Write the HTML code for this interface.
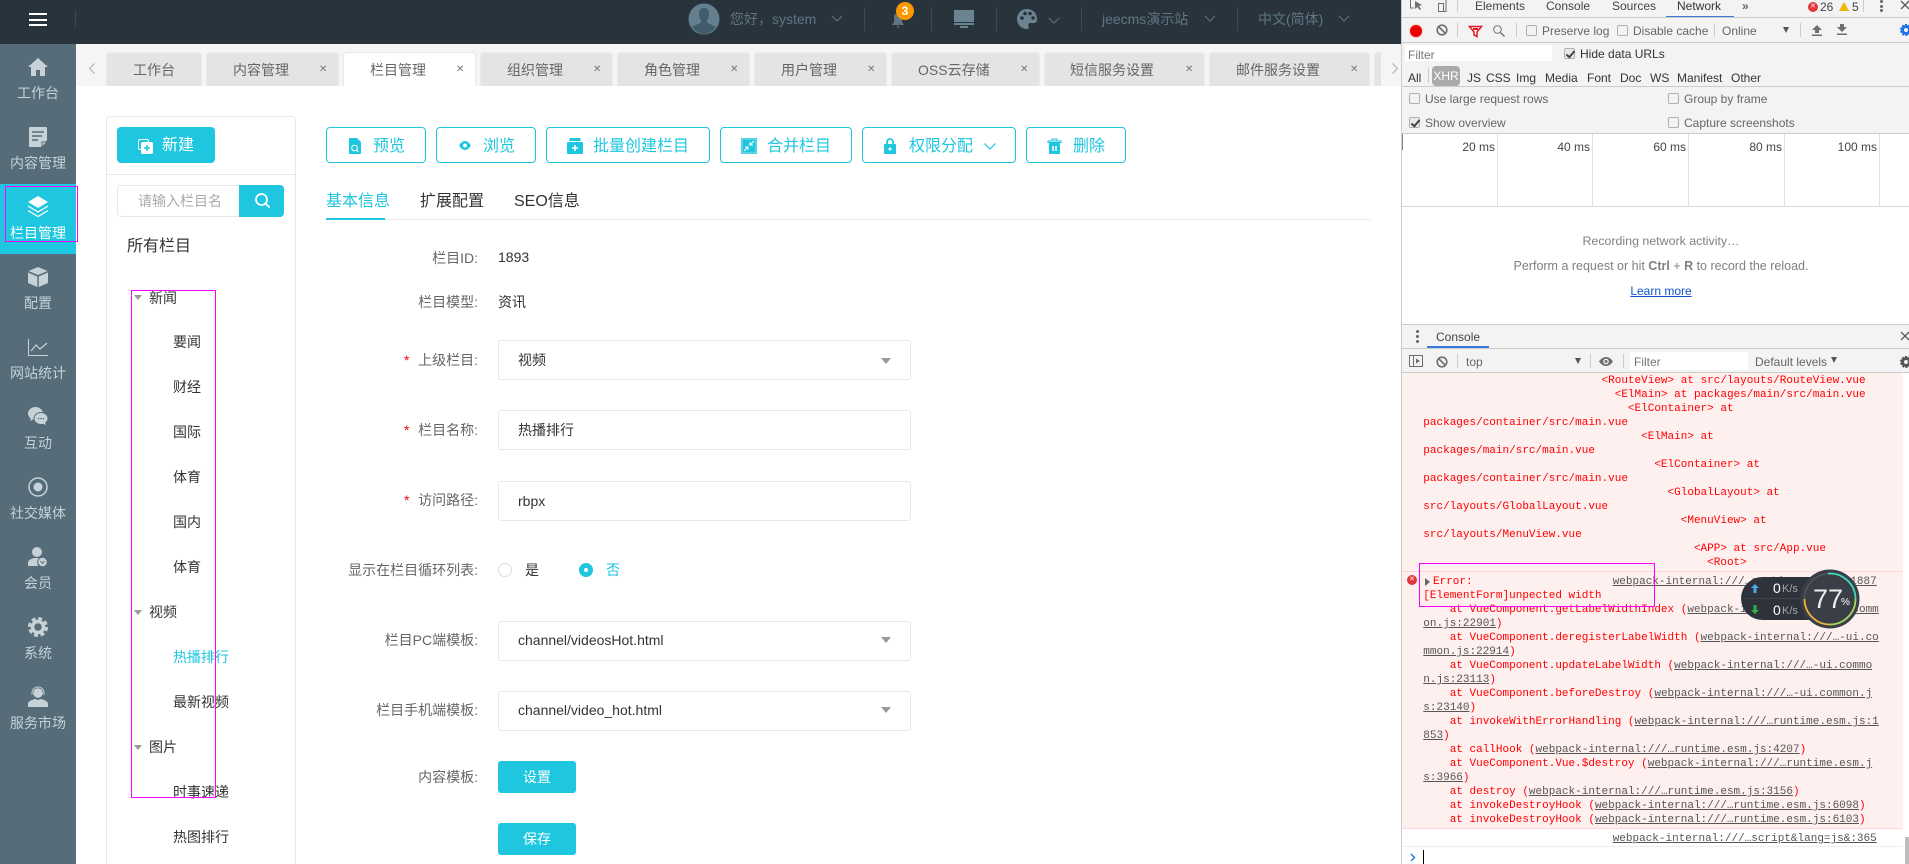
<!DOCTYPE html>
<html lang="zh-CN"><head><meta charset="utf-8"><title>栏目管理</title>
<style>
*{box-sizing:border-box}
html,body{margin:0;padding:0;width:1909px;height:864px;overflow:hidden;background:#fff}
body{position:relative;font-family:"Liberation Sans","Noto Sans CJK SC",sans-serif;font-size:14px;color:#333}
.t{position:absolute;white-space:pre;line-height:20px}
.b{position:absolute}
svg{position:absolute;overflow:visible}
.nav{left:0;width:76px;text-align:center;color:#c6d2d8}
.tab{position:absolute;top:52px;height:34px;background:#e4e4e4;border:1px solid #eaeaea;border-bottom:0;border-radius:4px 4px 0 0}
.tt{top:60px;color:#666}
.x{top:60px;color:#777;font-size:10px}
.btn{position:absolute;top:127px;height:36px;border:1px solid #1ec6df;border-radius:4px;background:#fff}
.bt{top:137px;font-size:16px;color:#1ec6df}
.lab{left:0;width:478px;text-align:right;color:#666}
.star{left:404px;color:#f00}
.inp{position:absolute;left:498px;width:413px;height:40px;border:1px solid #e8e8e8;border-radius:3px;background:#fff}
.val{left:518px;color:#333}
.tri{position:absolute;width:0;height:0;border-left:5px solid transparent;border-right:5px solid transparent;border-top:6px solid #999}
.c1{left:149px;color:#333}.c2{left:173px;color:#333}
.top{top:9px;color:#5f7682}
.dv{position:absolute;top:7px;width:1px;height:24px;background:#3c4a54}
.d{font-size:12px;line-height:16px;color:#444;position:absolute;white-space:pre}
.l{position:absolute;background:#ccc}
.cb{position:absolute;width:11px;height:11px;background:#f3f3f3;border:1px solid #b0b0b0;border-radius:2px}
.cb.on{background:#e8e8e8}
.cb.on:after{content:"";position:absolute;left:3px;top:0;width:3px;height:7px;border:solid #444;border-width:0 2px 2px 0;transform:rotate(40deg)}
.sp{position:absolute;width:1px;background:#ccc}
pre{position:absolute;margin:0;font-family:"Liberation Mono",monospace;font-size:11px;line-height:14px;color:#f00;white-space:pre}
u{color:#555}
.mg{position:absolute;border:1px solid #f0f;pointer-events:none}
</style></head>
<body>

<!-- top bar -->
<div class="b" style="left:0;top:0;width:1402px;height:44px;background:#29333c"></div>
<div class="b" style="left:29px;top:13px;width:18px;height:2px;background:#fff"></div>
<div class="b" style="left:29px;top:19px;width:18px;height:2px;background:#fff"></div>
<div class="b" style="left:29px;top:24px;width:18px;height:2px;background:#fff"></div>
<div class="dv" style="left:75px;top:10px;height:18px"></div>
<svg style="left:688px;top:3px" width="32" height="32" viewBox="0 0 32 32"><circle cx="16" cy="16" r="15.5" fill="#64808f"/><path d="M11 11c0-4 2-6 5-6s5 2 5 6c0 3-1 5-2 6v2c1 2 6 3 9 5-3 4-7 7-12 7S7 28 4 24c3-2 8-3 9-5v-2c-1-1-2-3-2-6z" fill="#415c6b"/></svg>
<div class="t top" style="left:730px">您好，system</div>
<svg style="left:832px;top:16px" width="10" height="6"><path d="M0 0l5 5 5-5" fill="none" stroke="#5f7682"/></svg>
<div class="dv" style="left:864px"></div>
<svg style="left:891px;top:12px" width="14" height="16" viewBox="0 0 14 16"><path d="M7 1C4 1 3 3 3 6v4L1 13h12l-2-3V6c0-3-1-5-4-5zM5.500 14h3L7 16z" fill="#5f7682"/></svg>
<div class="b" style="left:896px;top:2px;width:18px;height:18px;border-radius:50%;background:#ff9800;color:#fff;font-weight:bold;font-size:12px;line-height:18px;text-align:center">3</div>
<div class="dv" style="left:931px"></div>
<svg style="left:954px;top:10px" width="20" height="18" viewBox="0 0 20 18"><path d="M0 0h20v12H0zM0 13h20v2H0zM6 16h8v2H6z" fill="#6a8492"/></svg>
<div class="dv" style="left:996px"></div>
<svg style="left:1017px;top:9px" width="20" height="20" viewBox="0 0 20 20"><path d="M10 0a10 10 0 1 0 0 20c2 0 2-1.500 1.500-3-.6-1.800.5-3 2-3H17c2 0 3-1.500 3-4 0-6-4.500-10-10-10z" fill="#6a8492"/><circle cx="5" cy="9" r="1.800" fill="#29333c"/><circle cx="8" cy="4.500" r="1.800" fill="#29333c"/><circle cx="13" cy="4.500" r="1.800" fill="#29333c"/><circle cx="16" cy="9" r="1.800" fill="#29333c"/></svg>
<svg style="left:1049px;top:18px" width="10" height="6"><path d="M0 0l5 5 5-5" fill="none" stroke="#5f7682"/></svg>
<div class="dv" style="left:1081px"></div>
<div class="t top" style="left:1102px">jeecms演示站</div>
<svg style="left:1205px;top:16px" width="10" height="6"><path d="M0 0l5 5 5-5" fill="none" stroke="#5f7682"/></svg>
<div class="dv" style="left:1237px"></div>
<div class="t top" style="left:1258px">中文(简体)</div>
<svg style="left:1339px;top:16px" width="10" height="6"><path d="M0 0l5 5 5-5" fill="none" stroke="#5f7682"/></svg>

<!-- sidebar -->
<div class="b" style="left:0;top:44px;width:76px;height:820px;background:#566c78"></div>
<div class="b" style="left:0;top:184px;width:76px;height:70px;background:#1ec6df"></div>

<svg style="left:28px;top:57px" width="20" height="20" viewBox="0 0 20 20"><path d="M10 1L0 10h3v9h5v-6h4v6h5v-9h3z" fill="#c6d2d8"/></svg>
<div class="t nav" style="top:83px">工作台</div>
<svg style="left:29px;top:127px" width="18" height="20" viewBox="0 0 18 20"><path d="M1 0h16a1 1 0 0 1 1 1v12l-6 7H1a1 1 0 0 1-1-1V1a1 1 0 0 1 1-1z" fill="#c6d2d8"/><path d="M3 5h12M3 9h10M3 13h6" stroke="#566c78" stroke-width="1.500"/><path d="M13 20v-5h5z" fill="#c6d2d8" stroke="#566c78"/></svg>
<div class="t nav" style="top:153px">内容管理</div>
<svg style="left:28px;top:196px" width="20" height="21" viewBox="0 0 20 21"><path d="M10 0l10 6-10 6L0 6z" fill="#fff"/><path d="M0 10l10 6 10-6M0 14.500l10 6 10-6" fill="none" stroke="#fff" stroke-width="1.300"/></svg>
<div class="t nav" style="top:223px;color:#fff">栏目管理</div>
<svg style="left:28px;top:267px" width="20" height="20" viewBox="0 0 20 20"><path d="M10 0l9.500 4L10 8 .5 4zM0 5.500l9.300 4V20L0 16zM20 5.500l-9.300 4V20l9.300-4z" fill="#c6d2d8"/></svg>
<div class="t nav" style="top:293px">配置</div>
<svg style="left:28px;top:339px" width="20" height="17" viewBox="0 0 20 17"><path d="M.5 0v16.500H20" fill="none" stroke="#c6d2d8"/><path d="M3 12l5-6 4 4 7-6" fill="none" stroke="#c6d2d8" stroke-width="1.200"/></svg>
<div class="t nav" style="top:363px">网站统计</div>
<svg style="left:28px;top:407px" width="20" height="20" viewBox="0 0 20 20"><path d="M7.500 0C3.400 0 0 2.900 0 6.500c0 2 1 3.800 2.700 5L2 14l3-1.500c.8.200 1.600.3 2.500.3C11.600 12.800 15 9.900 15 6.500S11.600 0 7.500 0z" fill="#c6d2d8"/><path d="M13 5.500c-3.900 0-7 2.700-7 6s3.100 6 7 6c.7 0 1.300-.1 2-.2L18.500 19l-.8-3.200c1.400-1.100 2.300-2.600 2.300-4.300 0-3.300-3.100-6-7-6z" fill="#c6d2d8" stroke="#566c78"/><circle cx="10.500" cy="11.500" r=".8" fill="#566c78"/><circle cx="13" cy="11.500" r=".8" fill="#566c78"/><circle cx="15.500" cy="11.500" r=".8" fill="#566c78"/></svg>
<div class="t nav" style="top:433px">互动</div>
<svg style="left:28px;top:477px" width="20" height="20" viewBox="0 0 20 20"><circle cx="10" cy="10" r="9" fill="none" stroke="#c6d2d8" stroke-width="1.500"/><circle cx="10" cy="10" r="4.500" fill="#c6d2d8"/></svg>
<div class="t nav" style="top:503px">社交媒体</div>
<svg style="left:28px;top:547px" width="20" height="20" viewBox="0 0 20 20"><circle cx="9" cy="5" r="5" fill="#c6d2d8"/><path d="M0 19v-3c0-3 3-4 6-5h6l1 1a6 6 0 0 0-3 7z" fill="#c6d2d8"/><circle cx="14.500" cy="15" r="4.800" fill="#c6d2d8" stroke="#566c78"/><path d="M12.500 14l2 2.500 2-2.500" fill="none" stroke="#566c78"/></svg>
<div class="t nav" style="top:573px">会员</div>
<svg style="left:28px;top:617px" width="20" height="20" viewBox="0 0 20 20"><circle cx="10" cy="10" r="8.500" fill="none" stroke="#c6d2d8" stroke-width="3" stroke-dasharray="4 2.670"/><circle cx="10" cy="10" r="5.500" fill="none" stroke="#c6d2d8" stroke-width="3.500"/></svg>
<div class="t nav" style="top:643px">系统</div>
<svg style="left:28px;top:687px" width="20" height="20" viewBox="0 0 20 20"><circle cx="10" cy="6" r="4.800" fill="#c6d2d8"/><path d="M4 8V6a6 6 0 0 1 12 0v2" fill="none" stroke="#c6d2d8"/><path d="M0 20v-3c0-3 4-4 7-5l3 1 3-1c3 1 7 2 7 5v3z" fill="#c6d2d8"/></svg>
<div class="t nav" style="top:713px">服务市场</div>

<div class="mg" style="left:5px;top:186px;width:73px;height:56px"></div>

<!-- tab bar -->
<div class="b" style="left:76px;top:44px;width:1326px;height:42px;background:#f5f5f5"></div>
<svg style="left:89px;top:63px" width="6" height="11"><path d="M5.500 .5L.5 5.500l5 5" fill="none" stroke="#aaa"/></svg>
<div class="tab" style="left:106px;width:96px"></div><div class="t tt" style="left:133px">工作台</div>
<div class="tab" style="left:206px;width:133px"></div><div class="t tt" style="left:233px">内容管理</div><div class="t x" style="left:319px">✕</div>
<div class="tab" style="left:343px;width:133px;background:#fff;border-color:#e8e8e8"></div><div class="t tt" style="left:370px">栏目管理</div><div class="t x" style="left:456px">✕</div>
<div class="tab" style="left:480px;width:133px"></div><div class="t tt" style="left:507px">组织管理</div><div class="t x" style="left:593px">✕</div>
<div class="tab" style="left:617px;width:133px"></div><div class="t tt" style="left:644px">角色管理</div><div class="t x" style="left:730px">✕</div>
<div class="tab" style="left:754px;width:133px"></div><div class="t tt" style="left:781px">用户管理</div><div class="t x" style="left:867px">✕</div>
<div class="tab" style="left:891px;width:149px"></div><div class="t tt" style="left:918px">OSS云存储</div><div class="t x" style="left:1020px">✕</div>
<div class="tab" style="left:1044px;width:161px"></div><div class="t tt" style="left:1070px">短信服务设置</div><div class="t x" style="left:1185px">✕</div>
<div class="tab" style="left:1209px;width:161px"></div><div class="t tt" style="left:1236px">邮件服务设置</div><div class="t x" style="left:1350px">✕</div>
<div class="tab" style="left:1374px;width:7px;border-right:0;border-radius:4px 0 0 0"></div>
<svg style="left:1392px;top:63px" width="6" height="11"><path d="M.5 .5l5 5-5 5" fill="none" stroke="#aaa"/></svg>

<!-- left tree panel -->
<div class="b" style="left:106px;top:116px;width:190px;height:760px;border:1px solid #e8e8e8;border-radius:4px"></div>
<div class="b" style="left:107px;top:174px;width:188px;height:1px;background:#e8e8e8"></div>
<div class="b" style="left:117px;top:127px;width:98px;height:36px;background:#1ec6df;border-radius:4px"></div>
<svg style="left:138px;top:139px" width="15" height="15" viewBox="0 0 15 15"><rect x=".5" y=".5" width="10" height="10" rx="1.500" fill="none" stroke="#fff"/><rect x="3" y="3" width="12" height="12" rx="2" fill="#fff"/><path d="M9 6v6M6 9h6" stroke="#1ec6df" stroke-width="1.500"/></svg>
<div class="t" style="left:162px;top:136px;font-size:16px;color:#fff">新建</div>
<div class="b" style="left:117px;top:185px;width:123px;height:32px;border:1px solid #e8e8e8;border-radius:4px 0 0 4px"></div>
<div class="t" style="left:138px;top:191px;color:#aaa">请输入栏目名</div>
<div class="b" style="left:239px;top:185px;width:45px;height:32px;background:#1ec6df;border-radius:0 4px 4px 0"></div>
<svg style="left:255px;top:193px" width="15" height="15" viewBox="0 0 15 15"><circle cx="6.500" cy="6.500" r="5.500" fill="none" stroke="#fff" stroke-width="1.800"/><path d="M10.500 10.500l4 4" stroke="#fff" stroke-width="1.800"/></svg>
<div class="t" style="left:127px;top:237px;font-size:16px;color:#333">所有栏目</div>

<div class="tri" style="left:134px;top:295px;border-left-width:4px;border-right-width:4px;border-top-width:5px"></div>
<div class="t c1" style="top:288px">新闻</div>
<div class="t c2" style="top:332px">要闻</div>
<div class="t c2" style="top:377px">财经</div>
<div class="t c2" style="top:422px">国际</div>
<div class="t c2" style="top:467px">体育</div>
<div class="t c2" style="top:512px">国内</div>
<div class="t c2" style="top:557px">体育</div>
<div class="tri" style="left:134px;top:610px;border-left-width:4px;border-right-width:4px;border-top-width:5px"></div>
<div class="t c1" style="top:602px">视频</div>
<div class="t c2" style="top:647px;color:#1ec6df">热播排行</div>
<div class="t c2" style="top:692px">最新视频</div>
<div class="tri" style="left:134px;top:745px;border-left-width:4px;border-right-width:4px;border-top-width:5px"></div>
<div class="t c1" style="top:737px">图片</div>
<div class="t c2" style="top:782px">时事速递</div>
<div class="t c2" style="top:827px">热图排行</div>
<div class="mg" style="left:131px;top:290px;width:85px;height:508px"></div>

<!-- action buttons -->
<div class="btn" style="left:326px;width:100px"></div>
<svg style="left:349px;top:138px" width="12" height="16" viewBox="0 0 12 16"><path d="M0 1a1 1 0 0 1 1-1h7l4 4v11a1 1 0 0 1-1 1H1a1 1 0 0 1-1-1z" fill="#1ec6df"/><circle cx="5.500" cy="10" r="2.800" fill="none" stroke="#fff"/><path d="M7.500 12l2 2" stroke="#fff"/></svg>
<div class="t bt" style="left:373px">预览</div>
<div class="btn" style="left:436px;width:100px"></div>
<svg style="left:459px;top:141px" width="12" height="9" viewBox="0 0 12 9"><path d="M0 4.500C2 1.500 4 0 6 0s4 1.500 6 4.500C10 7.500 8 9 6 9S2 7.500 0 4.500z" fill="#1ec6df"/><circle cx="6" cy="4.500" r="2" fill="#fff"/></svg>
<div class="t bt" style="left:483px">浏览</div>
<div class="btn" style="left:546px;width:164px"></div>
<svg style="left:567px;top:138px" width="16" height="16" viewBox="0 0 16 16"><path d="M3 0h10l1 3H2zM1 4h14a1 1 0 0 1 1 1v10a1 1 0 0 1-1 1H1a1 1 0 0 1-1-1V5a1 1 0 0 1 1-1z" fill="#1ec6df"/><path d="M8 7v6M5 10h6" stroke="#fff" stroke-width="1.500"/></svg>
<div class="t bt" style="left:593px">批量创建栏目</div>
<div class="btn" style="left:720px;width:132px"></div>
<svg style="left:741px;top:138px" width="16" height="16" viewBox="0 0 16 16"><path d="M0 0h16v16H0z" fill="#1ec6df"/><path d="M1 1h14v14H1z" fill="none" stroke="#fff" stroke-width=".5"/><path d="M13 3L9 7M9 4v3h3M3 13l4-4M4 9h3v3" fill="none" stroke="#fff"/></svg>
<div class="t bt" style="left:767px">合并栏目</div>
<div class="btn" style="left:862px;width:154px"></div>
<svg style="left:884px;top:138px" width="12" height="16" viewBox="0 0 12 16"><path d="M3 6V4a3 3 0 0 1 6 0v2" fill="none" stroke="#1ec6df" stroke-width="1.800"/><rect y="6" width="12" height="10" rx="1" fill="#1ec6df"/><circle cx="6" cy="11" r="1.500" fill="#fff"/></svg>
<div class="t bt" style="left:909px">权限分配</div>
<svg style="left:984px;top:143px" width="12" height="7"><path d="M.5 .5l5.500 5.500 5.500-5.500" fill="none" stroke="#1ec6df" stroke-width="1.200"/></svg>
<div class="btn" style="left:1026px;width:100px"></div>
<svg style="left:1048px;top:138px" width="13" height="16" viewBox="0 0 13 16"><path d="M0 3h13v1.500H0zM4 3V1h5v2" fill="none" stroke="#1ec6df"/><path d="M1 5h11v11H1z" fill="#1ec6df"/><path d="M5 8v5M8 8v5" stroke="#fff" stroke-width="1.500"/></svg>
<div class="t bt" style="left:1073px">删除</div>

<!-- form tabs -->
<div class="b" style="left:326px;top:219px;width:1045px;height:1px;background:#e8e8e8"></div>
<div class="b" style="left:326px;top:218px;width:59px;height:2px;background:#1ec6df"></div>
<div class="t" style="left:326px;top:192px;font-size:16px;color:#1ec6df">基本信息</div>
<div class="t" style="left:420px;top:192px;font-size:16px;color:#333">扩展配置</div>
<div class="t" style="left:514px;top:192px;font-size:16px;color:#333">SEO信息</div>

<!-- form -->
<div class="t lab" style="top:248px">栏目ID:</div>
<div class="t" style="left:498px;top:247px;color:#333">1893</div>
<div class="t lab" style="top:292px">栏目模型:</div>
<div class="t" style="left:498px;top:292px;color:#333">资讯</div>

<div class="t star" style="top:350px">*</div><div class="t lab" style="top:350px">上级栏目:</div>
<div class="inp" style="top:340px"></div><div class="t val" style="top:350px">视频</div><div class="tri" style="left:881px;top:358px"></div>

<div class="t star" style="top:420px">*</div><div class="t lab" style="top:420px">栏目名称:</div>
<div class="inp" style="top:410px"></div><div class="t val" style="top:420px">热播排行</div>

<div class="t star" style="top:490px">*</div><div class="t lab" style="top:490px">访问路径:</div>
<div class="inp" style="top:481px"></div><div class="t val" style="top:491px">rbpx</div>

<div class="t lab" style="top:560px">显示在栏目循环列表:</div>
<div class="b" style="left:498px;top:563px;width:14px;height:14px;border:1px solid #ddd;border-radius:50%"></div>
<div class="t" style="left:525px;top:560px;color:#333">是</div>
<div class="b" style="left:579px;top:563px;width:14px;height:14px;background:#1ec6df;border-radius:50%"></div>
<div class="b" style="left:584px;top:568px;width:4px;height:4px;background:#fff;border-radius:50%"></div>
<div class="t" style="left:606px;top:560px;color:#1ec6df">否</div>

<div class="t lab" style="top:630px">栏目PC端模板:</div>
<div class="inp" style="top:621px"></div><div class="t val" style="top:630px">channel/videosHot.html</div><div class="tri" style="left:881px;top:637px"></div>
<div class="t lab" style="top:700px">栏目手机端模板:</div>
<div class="inp" style="top:691px"></div><div class="t val" style="top:700px">channel/video_hot.html</div><div class="tri" style="left:881px;top:707px"></div>

<div class="t lab" style="top:767px">内容模板:</div>
<div class="b" style="left:498px;top:761px;width:78px;height:32px;background:#1ec6df;border-radius:3px;color:#fff;text-align:center;line-height:32px">设置</div>
<div class="b" style="left:498px;top:823px;width:78px;height:32px;background:#1ec6df;border-radius:3px;color:#fff;text-align:center;line-height:32px">保存</div>

<!-- devtools -->
<div class="b" style="left:1401px;top:0;width:508px;height:864px;background:#f3f3f3;border-left:1px solid #ccc"></div>

<svg style="left:1410px;top:0" width="14" height="11" viewBox="0 0 14 11"><path d="M.5 0v8H4" fill="none" stroke="#6e6e6e"/><path d="M5 1l7 4-3 1 2 3-1.500 1-2-3-2.500 2z" fill="#6e6e6e"/></svg>
<svg style="left:1434px;top:0" width="16" height="12" viewBox="0 0 16 12"><path d="M4.500 3.500h5v8h-5zM12 0v11.500H9.500" fill="none" stroke="#6e6e6e"/></svg>
<div class="sp" style="left:1457px;top:0;height:12px"></div>
<div class="d" style="left:1475px;top:-2px">Elements</div>
<div class="d" style="left:1546px;top:-2px">Console</div>
<div class="d" style="left:1612px;top:-2px">Sources</div>
<div class="d" style="left:1677px;top:-2px;color:#333">Network</div>
<div class="b" style="left:1666px;top:16px;width:68px;height:2px;background:#3879d9"></div>
<div class="d" style="left:1742px;top:-2px;font-weight:bold;color:#666">»</div>
<div class="b" style="left:1808px;top:2px;width:10px;height:10px;border-radius:50%;background:#e0363a;color:#fff;font-size:7px;line-height:10px;text-align:center">✕</div>
<div class="d" style="left:1820px;top:-1px">26</div>
<svg style="left:1839px;top:2px" width="10" height="9"><path d="M5 0l5 9H0z" fill="#f4b400"/></svg>
<div class="d" style="left:1852px;top:-1px">5</div>
<div class="sp" style="left:1863px;top:0;height:12px"></div>
<div class="b" style="left:1880px;top:0;width:3px;height:3px;border-radius:50%;background:#666"></div>
<div class="b" style="left:1880px;top:5px;width:3px;height:3px;border-radius:50%;background:#666"></div>
<div class="b" style="left:1880px;top:9px;width:3px;height:3px;border-radius:50%;background:#666"></div>
<svg style="left:1901px;top:1px" width="8" height="9"><path d="M0 0l8 8M8 0L0 8" stroke="#555" stroke-width="1.300"/></svg>
<div class="l" style="left:1402px;top:17px;width:507px;height:1px"></div>
<div class="b" style="left:1409px;top:24px;width:14px;height:14px;border-radius:50%;background:#ffc5c5"></div>
<div class="b" style="left:1410px;top:25px;width:12px;height:12px;border-radius:50%;background:#e60000"></div>
<svg style="left:1436px;top:24px" width="12" height="12" viewBox="0 0 12 12"><circle cx="6" cy="6" r="4.800" fill="none" stroke="#6e6e6e" stroke-width="1.600"/><path d="M2.500 2.500l7 7" stroke="#6e6e6e" stroke-width="1.600"/></svg>
<div class="sp" style="left:1457px;top:23px;height:14px"></div>
<svg style="left:1469px;top:26px" width="13" height="11" viewBox="0 0 13 11"><path d="M.5 .5h12L8 6v4.500L5 9V6z" fill="#fff" stroke="#e0181e" stroke-width="1.500"/><path d="M4 3h5" stroke="#e0181e" stroke-width="2"/></svg>
<svg style="left:1493px;top:25px" width="12" height="12" viewBox="0 0 12 12"><circle cx="4.500" cy="4.500" r="3.800" fill="none" stroke="#6e6e6e"/><path d="M7.500 7.500l4 4" stroke="#6e6e6e" stroke-width="1.300"/></svg>
<div class="sp" style="left:1516px;top:23px;height:14px"></div>
<div class="cb" style="left:1526px;top:25px"></div>
<div class="d" style="left:1542px;top:23px;color:#666">Preserve log</div>
<div class="cb" style="left:1617px;top:25px"></div>
<div class="d" style="left:1633px;top:23px;color:#666">Disable cache</div>
<div class="sp" style="left:1714px;top:23px;height:14px"></div>
<div class="d" style="left:1722px;top:23px;color:#666">Online</div>
<div class="tri" style="left:1783px;top:27px;border-left-width:3px;border-right-width:3px;border-top:6px solid #555"></div>
<div class="sp" style="left:1800px;top:23px;height:14px"></div>
<svg style="left:1812px;top:25px" width="10" height="11" viewBox="0 0 10 11"><path d="M5 0l5 5H7v3H3V5H0zM0 9.500h10V11H0z" fill="#6e6e6e"/></svg>
<svg style="left:1837px;top:24px" width="10" height="11" viewBox="0 0 10 11"><path d="M5 8l5-5H7V0H3v3H0zM0 9.500h10V11H0z" fill="#6e6e6e"/></svg>
<svg style="left:1900px;top:24px" width="12" height="12" viewBox="0 0 12 12"><circle cx="6" cy="6" r="3.500" fill="none" stroke="#1a73e8" stroke-width="3"/><circle cx="6" cy="6" r="5.300" fill="none" stroke="#1a73e8" stroke-width="1.500" stroke-dasharray="2 1.400"/></svg>
<div class="l" style="left:1402px;top:42px;width:507px;height:1px"></div>

<div class="b" style="left:1405px;top:45px;width:147px;height:16px;background:#fff"></div>
<div class="d" style="left:1408px;top:47px;color:#757575">Filter</div>
<div class="cb on" style="left:1564px;top:48px"></div>
<div class="d" style="left:1580px;top:46px;color:#333">Hide data URLs</div>
<div class="d" style="left:1408px;top:70px;color:#333">All</div>
<div class="sp" style="left:1428px;top:68px;height:15px"></div>
<div class="b" style="left:1432px;top:66px;width:28px;height:20px;background:#aaa;border-radius:4px;color:#fff;font-size:12px;line-height:20px;text-align:center">XHR</div>
<div class="d" style="left:1467px;top:70px;color:#333">JS</div>
<div class="d" style="left:1486px;top:70px;color:#333">CSS</div>
<div class="d" style="left:1516px;top:70px;color:#333">Img</div>
<div class="d" style="left:1545px;top:70px;color:#333">Media</div>
<div class="d" style="left:1587px;top:70px;color:#333">Font</div>
<div class="d" style="left:1620px;top:70px;color:#333">Doc</div>
<div class="d" style="left:1650px;top:70px;color:#333">WS</div>
<div class="d" style="left:1677px;top:70px;color:#333">Manifest</div>
<div class="d" style="left:1731px;top:70px;color:#333">Other</div>
<div class="l" style="left:1402px;top:86px;width:507px;height:1px"></div>
<div class="cb" style="left:1409px;top:93px"></div><div class="d" style="left:1425px;top:91px;color:#666">Use large request rows</div>
<div class="cb" style="left:1668px;top:93px"></div><div class="d" style="left:1684px;top:91px;color:#666">Group by frame</div>
<div class="cb on" style="left:1409px;top:117px"></div><div class="d" style="left:1425px;top:115px;color:#666">Show overview</div>
<div class="cb" style="left:1668px;top:117px"></div><div class="d" style="left:1684px;top:115px;color:#666">Capture screenshots</div>
<div class="l" style="left:1402px;top:133px;width:507px;height:1px"></div>

<div class="b" style="left:1402px;top:134px;width:507px;height:190px;background:#fff"></div>
<div class="b" style="left:1402px;top:134px;width:1px;height:16px;background:#888"></div>
<div class="sp" style="left:1497px;top:134px;height:72px;background:#e0e0e0"></div>
<div class="sp" style="left:1592px;top:134px;height:72px;background:#e0e0e0"></div>
<div class="sp" style="left:1688px;top:134px;height:72px;background:#e0e0e0"></div>
<div class="sp" style="left:1784px;top:134px;height:72px;background:#e0e0e0"></div>
<div class="sp" style="left:1879px;top:134px;height:72px;background:#e0e0e0"></div>
<div class="d" style="right:414px;top:139px">20 ms</div>
<div class="d" style="right:319px;top:139px">40 ms</div>
<div class="d" style="right:223px;top:139px">60 ms</div>
<div class="d" style="right:127px;top:139px">80 ms</div>
<div class="d" style="right:32px;top:139px">100 ms</div>
<div class="l" style="left:1402px;top:206px;width:507px;height:1px;background:#d8d8d8"></div>
<div class="d" style="left:1402px;width:518px;top:233px;text-align:center;color:#808080;font-size:12.4px">Recording network activity…</div>
<div class="d" style="left:1402px;width:518px;top:258px;text-align:center;color:#808080;font-size:12.5px">Perform a request or hit <b>Ctrl</b> + <b>R</b> to record the reload.</div>
<div class="d" style="left:1402px;width:518px;top:283px;text-align:center;color:#1155cc;text-decoration:underline">Learn more</div>

<div class="l" style="left:1402px;top:324px;width:507px;height:1px"></div>
<div class="b" style="left:1416px;top:330px;width:3px;height:3px;border-radius:50%;background:#666"></div>
<div class="b" style="left:1416px;top:335px;width:3px;height:3px;border-radius:50%;background:#666"></div>
<div class="b" style="left:1416px;top:340px;width:3px;height:3px;border-radius:50%;background:#666"></div>
<div class="d" style="left:1436px;top:329px;color:#444">Console</div>
<div class="b" style="left:1427px;top:346px;width:62px;height:2px;background:#3879d9"></div>
<svg style="left:1901px;top:332px" width="8" height="9"><path d="M0 0l8 8M8 0L0 8" stroke="#555" stroke-width="1.300"/></svg>
<div class="l" style="left:1402px;top:348px;width:507px;height:1px"></div>
<svg style="left:1409px;top:355px" width="14" height="12" viewBox="0 0 14 12"><path d="M.5 .5h13v11H.5zM4.500 .5v11" fill="none" stroke="#6e6e6e"/><path d="M7 3.500l4 2.500-4 2.500z" fill="#6e6e6e"/></svg>
<svg style="left:1436px;top:356px" width="12" height="12" viewBox="0 0 12 12"><circle cx="6" cy="6" r="4.800" fill="none" stroke="#6e6e6e" stroke-width="1.600"/><path d="M2.500 2.500l7 7" stroke="#6e6e6e" stroke-width="1.600"/></svg>
<div class="sp" style="left:1457px;top:354px;height:14px"></div>
<div class="d" style="left:1466px;top:354px;color:#666">top</div>
<div class="tri" style="left:1575px;top:358px;border-left-width:3px;border-right-width:3px;border-top:6px solid #555"></div>
<div class="sp" style="left:1590px;top:354px;height:14px"></div>
<svg style="left:1599px;top:357px" width="14" height="9" viewBox="0 0 14 9"><path d="M0 4.500C2 1.500 4.500 0 7 0s5 1.500 7 4.500C12 7.500 9.500 9 7 9S2 7.500 0 4.500z" fill="#6e6e6e"/><circle cx="7" cy="4.500" r="2.800" fill="#f3f3f3"/><circle cx="7" cy="4.500" r="1.500" fill="#6e6e6e"/></svg>
<div class="sp" style="left:1623px;top:354px;height:14px"></div>
<div class="b" style="left:1630px;top:352px;width:118px;height:18px;background:#fff"></div>
<div class="d" style="left:1634px;top:354px;color:#757575">Filter</div>
<div class="d" style="left:1755px;top:354px;color:#666">Default levels</div>
<div class="tri" style="left:1831px;top:357px;border-left-width:3px;border-right-width:3px;border-top:6px solid #555"></div>
<svg style="left:1900px;top:356px" width="12" height="12" viewBox="0 0 12 12"><circle cx="6" cy="6" r="3.500" fill="none" stroke="#555" stroke-width="3"/><circle cx="6" cy="6" r="5.300" fill="none" stroke="#555" stroke-width="1.500" stroke-dasharray="2 1.400"/></svg>
<div class="l" style="left:1402px;top:372px;width:507px;height:1px"></div>

<!-- console -->
<div class="b" style="left:1402px;top:373px;width:507px;height:491px;background:#fff"></div>
<div class="b" style="left:1402px;top:373px;width:501px;height:456px;background:#fff0f0;border-bottom:1px solid #ffd6d6"></div>
<div class="b" style="left:1402px;top:571px;width:501px;height:1px;background:#ffd6d6"></div>
<div class="b" style="left:1905px;top:837px;width:4px;height:27px;background:#bdbdbd"></div>
<pre style="left:1423.300px;top:374px">                           &lt;RouteView&gt; at src/layouts/RouteView.vue
                             &lt;ElMain&gt; at packages/main/src/main.vue
                               &lt;ElContainer&gt; at
packages/container/src/main.vue
                                 &lt;ElMain&gt; at
packages/main/src/main.vue
                                   &lt;ElContainer&gt; at
packages/container/src/main.vue
                                     &lt;GlobalLayout&gt; at
src/layouts/GlobalLayout.vue
                                       &lt;MenuView&gt; at
src/layouts/MenuView.vue
                                         &lt;APP&gt; at src/App.vue
                                           &lt;Root&gt;</pre>
<div class="b" style="left:1407px;top:575px;width:10px;height:10px;border-radius:50%;background:#e0363a;color:#fff;font-size:7px;line-height:10px;text-align:center">✕</div>
<div class="tri" style="left:1425px;top:578px;border-top:4px solid transparent;border-bottom:4px solid transparent;border-left:5px solid #666;border-right:0"></div>
<pre style="left:1433px;top:575px">Error:</pre>
<pre style="left:1612.700px;top:575px"><u>webpack-internal:///…runtime.esm.js:1887</u></pre>
<pre style="left:1423.300px;top:589px">[ElementForm]unpected width
    at VueComponent.getLabelWidthIndex (<u>webpack-internal:///…-ui.comm</u>
<u>on.js:22901</u>)
    at VueComponent.deregisterLabelWidth (<u>webpack-internal:///…-ui.co</u>
<u>mmon.js:22914</u>)
    at VueComponent.updateLabelWidth (<u>webpack-internal:///…-ui.commo</u>
<u>n.js:23113</u>)
    at VueComponent.beforeDestroy (<u>webpack-internal:///…-ui.common.j</u>
<u>s:23140</u>)
    at invokeWithErrorHandling (<u>webpack-internal:///…runtime.esm.js:1</u>
<u>853</u>)
    at callHook (<u>webpack-internal:///…runtime.esm.js:4207</u>)
    at VueComponent.Vue.$destroy (<u>webpack-internal:///…runtime.esm.j</u>
<u>s:3966</u>)
    at destroy (<u>webpack-internal:///…runtime.esm.js:3156</u>)
    at invokeDestroyHook (<u>webpack-internal:///…runtime.esm.js:6098</u>)
    at invokeDestroyHook (<u>webpack-internal:///…runtime.esm.js:6103</u>)</pre>
<pre style="left:1612.700px;top:832px"><u>webpack-internal:///…script&amp;lang=js&amp;:365</u></pre>
<div class="b" style="left:1402px;top:846px;width:501px;height:1px;background:#eee"></div>
<svg style="left:1410px;top:853px" width="6" height="9"><path d="M1 1l3.500 3.500L1 8" fill="none" stroke="#3879d9" stroke-width="1.500"/></svg>
<div class="b" style="left:1423px;top:850px;width:1px;height:14px;background:#000"></div>
<div class="mg" style="left:1419px;top:563px;width:236px;height:44px"></div>

<!-- speed widget -->
<div class="b" style="left:1741px;top:577px;width:100px;height:43px;background:#2e323a;border-radius:22px"></div>
<div class="b" style="left:1745px;top:598px;width:60px;height:1px;background:#3e434c"></div>
<svg style="left:1751px;top:584px" width="8" height="9"><path d="M4 0l4 4H5.500v5h-3V4H0z" fill="#4aa8e8"/></svg>
<svg style="left:1751px;top:605px" width="8" height="9"><path d="M4 9l4-4H5.500V0h-3v5H0z" fill="#2fb344"/></svg>
<div class="t" style="left:1773px;top:578px;font-size:14px;color:#fff">0</div>
<div class="t" style="left:1782px;top:579px;font-size:11px;color:#a0a4aa">K/s</div>
<div class="t" style="left:1773px;top:600px;font-size:14px;color:#fff">0</div>
<div class="t" style="left:1782px;top:601px;font-size:11px;color:#a0a4aa">K/s</div>
<svg style="left:1800px;top:569px" width="60" height="60" viewBox="0 0 60 60">
<circle cx="30" cy="30" r="29.500" fill="#3a3e47"/>
<circle cx="30" cy="30" r="25.500" fill="none" stroke="#5b6068" stroke-width="1"/>
<path d="M28 4.600A25.500 25.500 0 0 1 55.500 30" fill="none" stroke="#3fd8b8" stroke-width="1.800"/>
<path d="M55.500 30A25.500 25.500 0 0 1 30 55.500" fill="none" stroke="#a9d95c" stroke-width="1.800"/>
<path d="M30 55.500A25.500 25.500 0 0 1 4.500 30" fill="none" stroke="#eeb33c" stroke-width="1.800"/>
</svg>
<div class="t" style="left:1813px;top:584px;font-size:27px;line-height:30px;color:#eee">77</div>
<div class="t" style="left:1841px;top:593px;font-size:10px;color:#fff">%</div>

</body></html>
